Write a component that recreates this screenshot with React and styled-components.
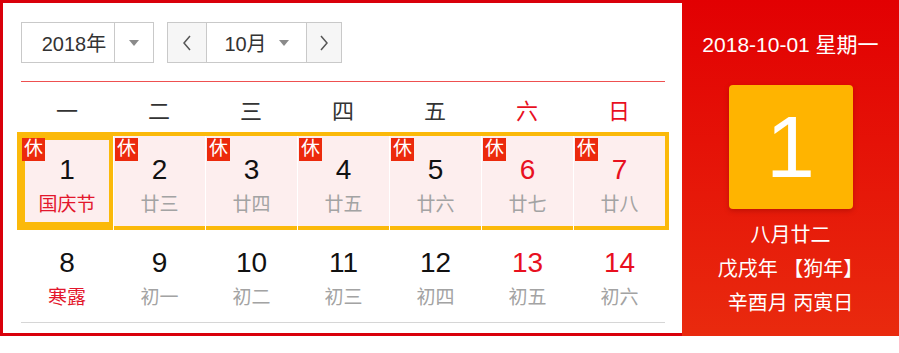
import React from 'react'
import styled, {createGlobalStyle} from 'styled-components'

const GlobalStyle = createGlobalStyle`
  html, body { margin: 0; padding: 0; background: #fff; }
  body { font-family: "Liberation Sans", "Noto Sans CJK SC", sans-serif; }
`

const YELLOW = '#fbb90a'
const RED = '#e8101f'

const Wrapper = styled.div`
  display: flex;
  width: 899px;
  height: 336px;
`

const Panel = styled.div`
  box-sizing: border-box;
  width: 682px;
  height: 336px;
  border: 3px solid #d9000b;
  border-right: none;
  padding: 19px 17px 0 18px;
  background: #fff;
`

const Toolbar = styled.div`
  display: flex;
  gap: 13px;
  height: 41px;
`

const Select = styled.div`
  display: flex;
  box-sizing: border-box;
  height: 41px;
  border: 1px solid #c9c9c9;
  color: #333;
  font-size: 20px;
`

const Part = styled.div`
  box-sizing: border-box;
  width: ${p => p.$w}px;
  display: flex;
  align-items: center;
  justify-content: center;
  gap: ${p => p.$gap || 0}px;
  padding-left: ${p => p.$pl || 0}px;
  background: ${p => (p.$shade ? '#f6f6f6' : '#fff')};
  & + & { border-left: 1px solid #c9c9c9; }
`

const Caret = styled.span`
  width: 0;
  height: 0;
  border-left: 5px solid transparent;
  border-right: 5px solid transparent;
  border-top: 6px solid #8a8a8a;
`

const Rule = styled.div`
  height: 1px;
  width: 644px;
  margin-top: ${p => p.$gap}px;
  background: ${p => p.$color};
`

const Grid = styled.div`
  display: grid;
  grid-template-columns: repeat(7, 92px);
  width: 644px;
`

const Head = styled.div`
  height: 54px;
  display: flex;
  align-items: center;
  justify-content: center;
  font-size: 22px;
  color: ${p => (p.$weekend ? RED : '#333')};
`

const Row = styled(Grid)`
  height: 90px;
  ${p => p.$holiday && `
    outline: 4px solid ${YELLOW};
    background: #fdeeee;
  `}
`

const Cell = styled.div`
  position: relative;
  box-sizing: border-box;
  display: flex;
  flex-direction: column;
  align-items: center;
  padding-top: ${p => (p.$holiday ? 19 : 22)}px;
  ${p => p.$holiday && `& + & { border-left: 1px solid #fff; }`}
  ${p => p.$selected && `box-shadow: inset 0 0 0 4px ${YELLOW};`}
`

const Num = styled.div`
  font-size: 28px;
  line-height: 30px;
  color: ${p => (p.$weekend ? RED : '#111')};
`

const Lunar = styled.div`
  margin-top: 8px;
  font-size: 19px;
  line-height: 24px;
  color: ${p => (p.$festival ? '#e3172c' : '#a3a3a3')};
`

const Badge = styled.span`
  position: absolute;
  top: 2px;
  left: 1px;
  width: 23px;
  height: 23px;
  background: #ec2a0c;
  color: #fff;
  font-size: 19px;
  line-height: 22px;
  text-align: center;
`

const Side = styled.div`
  width: 217px;
  height: 336px;
  display: flex;
  flex-direction: column;
  align-items: center;
  background: linear-gradient(#e20002, #e92a0e);
  color: #fff;
`

const Today = styled.div`
  margin-top: 32px;
  font-size: 21px;
  line-height: 26px;
`

const Big = styled.div`
  margin-top: 27px;
  width: 124px;
  height: 124px;
  border-radius: 4px;
  background: #ffb400;
  box-shadow: 0 2px 5px rgba(120, 0, 0, 0.35);
  display: flex;
  align-items: center;
  justify-content: center;
  font-size: 88px;
`

const Info = styled.div`
  margin-top: 9px;
  font-size: 20px;
  line-height: 34px;
  text-align: center;
`

const Chevron = ({dir}) => (
  <svg width="10" height="16" viewBox="0 0 10 16" fill="none" stroke="#555" strokeWidth="1.5">
    <path d={dir === 'left' ? 'M8 1 L2 8 L8 15' : 'M2 1 L8 8 L2 15'} />
  </svg>
)

const weekdays = ['一', '二', '三', '四', '五', '六', '日']
const week1 = [
  ['1', '国庆节'], ['2', '廿三'], ['3', '廿四'], ['4', '廿五'],
  ['5', '廿六'], ['6', '廿七'], ['7', '廿八'],
]
const week2 = [
  ['8', '寒露'], ['9', '初一'], ['10', '初二'], ['11', '初三'],
  ['12', '初四'], ['13', '初五'], ['14', '初六'],
]
const festivals = ['国庆节', '寒露']

export default function App() {
  return (
    <Wrapper>
      <GlobalStyle />
      <Panel>
        <Toolbar>
          <Select>
            <Part $w={92} $pl={12}>2018年</Part>
            <Part $w={39}><Caret /></Part>
          </Select>
          <Select>
            <Part $w={38} $shade><Chevron dir="left" /></Part>
            <Part $w={100} $gap={12}>10月<Caret /></Part>
            <Part $w={35} $shade><Chevron dir="right" /></Part>
          </Select>
        </Toolbar>
        <Rule $color="#ee5050" $gap={18} />
        <Grid>
          {weekdays.map((d, i) => <Head key={d} $weekend={i > 4}>{d}</Head>)}
        </Grid>
        <Row $holiday>
          {week1.map(([n, l], i) => (
            <Cell key={n} $holiday $selected={i === 0}>
              <Badge>休</Badge>
              <Num $weekend={i > 4}>{n}</Num>
              <Lunar $festival={festivals.includes(l)}>{l}</Lunar>
            </Cell>
          ))}
        </Row>
        <Row>
          {week2.map(([n, l], i) => (
            <Cell key={n}>
              <Num $weekend={i > 4}>{n}</Num>
              <Lunar $festival={festivals.includes(l)}>{l}</Lunar>
            </Cell>
          ))}
        </Row>
        <Rule $color="#d6d6d6" $gap={6} />
      </Panel>
      <Side>
        <Today>2018-10-01 星期一</Today>
        <Big>1</Big>
        <Info>
          <div>八月廿二</div>
          <div>戊戌年 【狗年】</div>
          <div>辛酉月 丙寅日</div>
        </Info>
      </Side>
    </Wrapper>
  )
}
